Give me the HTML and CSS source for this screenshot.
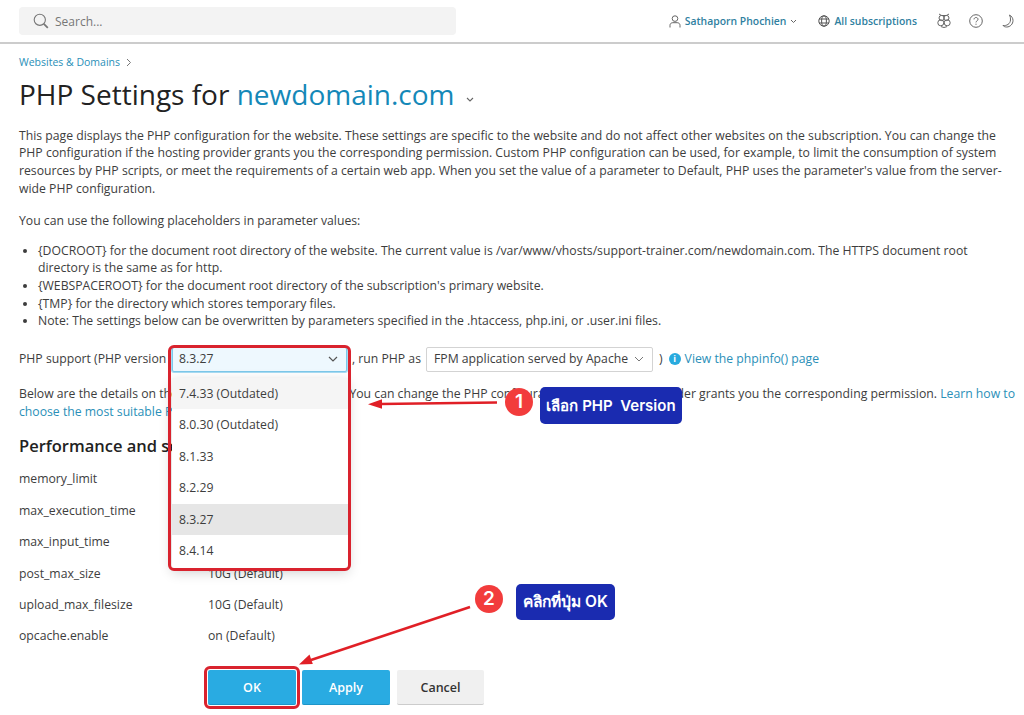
FILE: index.html
```html
<!DOCTYPE html>
<html>
<head>
    <title>PHP Settings for newdomain.com</title>
    <meta name="viewport" content="width=device-width, initial-scale=1.0">
    <link rel="stylesheet" href="styles.css">
</head>
<body>
    <header class="topbar">
        <div class="search">
            <svg class="search-icon" width="16" height="16" viewBox="0 0 16 16" fill="none" stroke="#777" stroke-width="1.1"><circle cx="6.8" cy="6.8" r="5.6"/><path d="M10.8 10.8l4 4" stroke-width="1.8"/></svg>
            <span>Search...</span>
        </div>
        <div class="topbar-right">
            <a class="top-link user-link">
                <svg width="12" height="13" viewBox="0 0 12 13" fill="none" stroke="#666" stroke-width="1"><circle cx="6" cy="3.6" r="2.8"/><path d="M1 12.5v-2.2c0-1.6 1.2-2.6 2.8-2.6h4.4c1.6 0 2.8 1 2.8 2.6v2.2"/></svg>
                Sathaporn Phochien
                <svg class="caret-small" width="7" height="5" viewBox="0 0 7 5" fill="none" stroke="#666" stroke-width="1"><path d="M1 1l2.5 2.5L6 1"/></svg>
            </a>
            <a class="top-link subs-link">
                <svg width="12" height="12" viewBox="0 0 12 12" fill="none" stroke="#555" stroke-width="1"><circle cx="6" cy="6" r="5.2"/><ellipse cx="6" cy="6" rx="2.4" ry="5.2"/><path d="M1 4h10M1 8h10"/></svg>
                All subscriptions
            </a>
            <svg class="top-icon" width="14" height="15" viewBox="0 0 14 15" fill="none" stroke="#666" stroke-width="1"><path d="M2 1l2.500 1.500h5L12 1"/><circle cx="4.600" cy="5" r="2.600"/><circle cx="9.400" cy="5" r="2.600"/><circle cx="3.800" cy="9.800" r="3"/><circle cx="10.200" cy="9.800" r="3"/><path d="M4 13.600L7 14.500l3-.9"/></svg>
            <svg class="top-icon help-icon" width="14" height="14" viewBox="0 0 14 14" fill="none" stroke="#666" stroke-width="1"><circle cx="7" cy="7" r="6.300"/><path d="M5 5.400c0-1.200 1-1.900 2-1.900s2 .7 2 1.800c0 1.500-2 1.500-2 3.100"/><path d="M7 9.700v1.100"/></svg>
            <svg class="top-icon moon-icon" width="12" height="14" viewBox="0 0 12 14" fill="none" stroke="#666" stroke-width="1"><path d="M7.500 1c2 1.200 3.500 3 3.500 5.500 0 3.500-2.800 6.500-6.300 6.500-1.500 0-3-.5-3.700-1.500 3.500.5 7.300-1.500 7.500-5.500.1-2-.2-3.700-1-5z"/></svg>
        </div>
    </header>

    <main class="content">
        <div class="breadcrumb"><a>Websites &amp; Domains</a><svg width="6" height="9" viewBox="0 0 6 9" fill="none" stroke="#777" stroke-width="1"><path d="M1 1l3.500 3.500L1 8"/></svg></div>
        <h1>PHP Settings for <a>newdomain.com</a><svg class="title-caret" width="8" height="5" viewBox="0 0 8 5" fill="none" stroke="#666" stroke-width="1.100"><path d="M1 1l3 3 3-3"/></svg></h1>

        <p>This page displays the PHP configuration for the website. These settings are specific to the website and do not affect other websites on the subscription. You can change the PHP configuration if the hosting provider grants you the corresponding permission. Custom PHP configuration can be used, for example, to limit the consumption of system resources by PHP scripts, or meet the requirements of a certain web app. When you set the value of a parameter to Default, PHP uses the parameter's value from the server-wide PHP configuration.</p>
        <p class="list-intro">You can use the following placeholders in parameter values:</p>
        <ul>
            <li>{DOCROOT} for the document root directory of the website. The current value is /var/www/vhosts/support-trainer.com/newdomain.com. The HTTPS document root directory is the same as for http.</li>
            <li>{WEBSPACEROOT} for the document root directory of the subscription's primary website.</li>
            <li>{TMP} for the directory which stores temporary files.</li>
            <li>Note: The settings below can be overwritten by parameters specified in the .htaccess, php.ini, or .user.ini files.</li>
        </ul>

        <div class="php-row">
            <span class="php-label">PHP support (PHP version</span>
            <div class="select select-focus"><span>8.3.27</span><svg width="10" height="6" viewBox="0 0 10 6" fill="none" stroke="#555" stroke-width="1.200"><path d="M1 1l4 4 4-4"/></svg></div>
            <span class="run-as">, run PHP as</span>
            <div class="select select-handler"><span>FPM application served by Apache</span><svg width="10" height="6" viewBox="0 0 10 6" fill="none" stroke="#777" stroke-width="1"><path d="M1 1l4 4 4-4"/></svg></div>
            <span class="close-paren">)</span>
            <span class="info-dot">i</span>
            <a>View the phpinfo() page</a>
        </div>

        <p class="details">Below are the details on the PHP settings for this website. You can change the PHP configuration if the hosting provider grants you the corresponding permission. <a>Learn how to choose the most suitable PHP version.</a></p>

        <h2>Performance and security settings</h2>
        <div class="settings">
            <div class="setting"><span>memory_limit</span><span>512M (Default)</span></div>
            <div class="setting"><span>max_execution_time</span><span>300 (Default)</span></div>
            <div class="setting"><span>max_input_time</span><span>300 (Default)</span></div>
            <div class="setting"><span>post_max_size</span><span>10G (Default)</span></div>
            <div class="setting"><span>upload_max_filesize</span><span>10G (Default)</span></div>
            <div class="setting"><span>opcache.enable</span><span>on (Default)</span></div>
        </div>

        <div class="buttons">
            <button class="btn btn-primary btn-marked">OK</button>
            <button class="btn btn-primary">Apply</button>
            <button class="btn btn-cancel">Cancel</button>
        </div>
    </main>

    <!-- dropdown opened over the form -->
    <div class="dropdown">
        <div class="option option-hover">7.4.33 (Outdated)</div>
        <div class="option">8.0.30 (Outdated)</div>
        <div class="option">8.1.33</div>
        <div class="option">8.2.29</div>
        <div class="option option-selected">8.3.27</div>
        <div class="option">8.4.14</div>
    </div>

    <!-- tutorial annotations -->
    <div class="mark-box"></div>
    <svg class="arrows" width="1024" height="715" viewBox="0 0 1024 715">
        <path d="M497 402.500L380 404" stroke="#e01f26" stroke-width="2.500" fill="none"/>
        <path d="M368 404.200l14-5v9.500z" fill="#e01f26"/>
        <path d="M470 607L311 660" stroke="#e01f26" stroke-width="2.500" fill="none"/>
        <path d="M299 664.500l10.500-10 3.300 9.500z" fill="#e01f26"/>
    </svg>
    <div class="step step-one">1</div>
    <div class="note note-one">เลือก PHP&nbsp; Version</div>
    <div class="step step-two">2</div>
    <div class="note note-two">คลิกที่ปุ่ม OK</div>
</body>
</html>
```

FILE: styles.css
```css
body {
    font-family: "Open Sans", Arial, sans-serif;
    font-size: 12.230px;
    line-height: 17.700px;
    margin: 0;
    background-color: #fff;
    color: #3d3d3d;
    height: 715px;
    overflow: hidden;
    position: relative;
}
a {
    color: #2a8fb8;
    text-decoration: none;
}
.topbar {
    display: flex;
    align-items: center;
    justify-content: space-between;
    height: 42px;
    padding: 0 10px 0 19px;
    border-bottom: 2px solid #ccc;
    box-sizing: content-box;
}
.search {
    display: flex;
    align-items: center;
    gap: 6px;
    width: 437px;
    height: 28px;
    padding-left: 14px;
    box-sizing: border-box;
    background-color: #f3f3f3;
    border-radius: 4px;
    color: #777;
    font-size: 12px;
}
.search span {
    padding-top: 1px;
}
.topbar-right {
    display: flex;
    align-items: center;
}
.top-link {
    display: flex;
    align-items: center;
    gap: 4px;
    padding-top: 1px;
    font-size: 10.400px;
    font-weight: 600;
    color: #2f7f9f;
}
.subs-link {
    margin-left: 21px;
    margin-right: 20px;
}
.top-icon {
    display: block;
}
.help-icon {
    margin-left: 18px;
}
.moon-icon {
    margin-left: 19px;
}
.content {
    padding: 10px 8px 0 19px;
}
.breadcrumb {
    display: flex;
    align-items: center;
    gap: 6px;
    font-size: 10.500px;
    line-height: 16px;
}
h1 {
    font-size: 28px;
    line-height: 38px;
    font-weight: 400;
    color: #222;
    margin: 5px 0 13.500px;
}
h1 a {
    color: #1488b8;
}
.title-caret {
    margin-left: 11px;
    vertical-align: 3px;
}
p {
    margin: 0 0 14.300px;
}
.list-intro {
    margin-bottom: 12.300px;
}
ul {
    margin: 0 0 16px;
    padding-left: 19px;
}
.php-row {
    display: flex;
    align-items: center;
    height: 26px;
    white-space: nowrap;
}
.php-label {
    width: 153px;
}
.select {
    display: flex;
    align-items: center;
    justify-content: space-between;
    height: 25px;
    box-sizing: border-box;
    background-color: #fff;
    border: 1px solid #d3d3d3;
    border-radius: 2px;
}
.select-focus {
    width: 175px;
    padding: 0 8px 0 6px;
    background-color: #eef8fe;
    border: 1px solid #7cc8ea;
    box-shadow: 0 0 0 1px #a8dcf3;
}
.select-handler {
    width: 227px;
    padding: 0 8px 0 7px;
}
.run-as {
    margin-left: 5px;
    margin-right: 5px;
}
.close-paren {
    margin-left: 6px;
    margin-right: 6px;
}
.info-dot {
    display: flex;
    align-items: center;
    justify-content: center;
    width: 12px;
    height: 12px;
    margin-right: 4px;
    border-radius: 50%;
    background-color: #28aade;
    color: #fff;
    font-size: 9px;
    font-weight: 700;
    line-height: 12px;
}
.details {
    margin: 13px 0 0;
}
h2 {
    font-size: 16.500px;
    line-height: 24px;
    font-weight: 600;
    color: #222;
    margin: 13px 0 6px;
}
.setting {
    display: flex;
    align-items: center;
    height: 31.400px;
}
.setting span:first-child {
    width: 189px;
}
.buttons {
    display: flex;
    gap: 6px;
    margin: 18.500px 0 0 189px;
}
.btn {
    width: 88px;
    height: 35px;
    padding: 0;
    border: none;
    border-bottom: 1px solid #ccc;
    border-radius: 2px;
    background-color: #f0f0f0;
    color: #333;
    font-family: inherit;
    font-size: 12.500px;
    font-weight: 600;
}
.btn-primary {
    background-color: #29abe2;
    border-bottom-color: #1e95c8;
    color: #fff;
}
.btn-cancel {
    width: 87px;
    margin-left: 1px;
}
.btn-marked {
    outline: 3px solid #d9232e;
    outline-offset: 1px;
}
.dropdown {
    position: absolute;
    left: 172px;
    top: 378px;
    width: 176px;
    padding-bottom: 2px;
    background-color: #fff;
    box-shadow: 0 4px 12px rgba(0, 0, 0, 0.2);
}
.option {
    height: 31.400px;
    line-height: 31.400px;
    padding-left: 7px;
}
.option-hover {
    background-color: #f5f5f5;
}
.option-selected {
    background-color: #e6e6e6;
}
.mark-box {
    position: absolute;
    left: 168px;
    top: 345px;
    width: 177px;
    height: 220px;
    border: 3px solid #d9232e;
    border-radius: 6px;
}
.arrows {
    position: absolute;
    left: 0;
    top: 0;
    pointer-events: none;
}
.step {
    position: absolute;
    width: 28px;
    height: 28px;
    border-radius: 50%;
    background-color: #f23c3c;
    color: #fff;
    font-family: "Inter", sans-serif;
    font-size: 19px;
    font-weight: 600;
    line-height: 28px;
    text-align: center;
}
.step-one {
    left: 505px;
    top: 388px;
}
.step-two {
    left: 475px;
    top: 585px;
}
.note {
    position: absolute;
    display: flex;
    align-items: center;
    justify-content: center;
    background-color: #1a2bb0;
    border-radius: 5px;
    color: #fff;
    font-family: "Inter", "Noto Sans", sans-serif;
    font-weight: 600;
    white-space: nowrap;
}
.note-one {
    left: 540px;
    top: 387px;
    width: 142px;
    height: 37px;
    font-size: 15px;
}
.note-two {
    left: 516px;
    top: 584px;
    width: 99px;
    height: 36px;
    font-size: 15.500px;
}
```
